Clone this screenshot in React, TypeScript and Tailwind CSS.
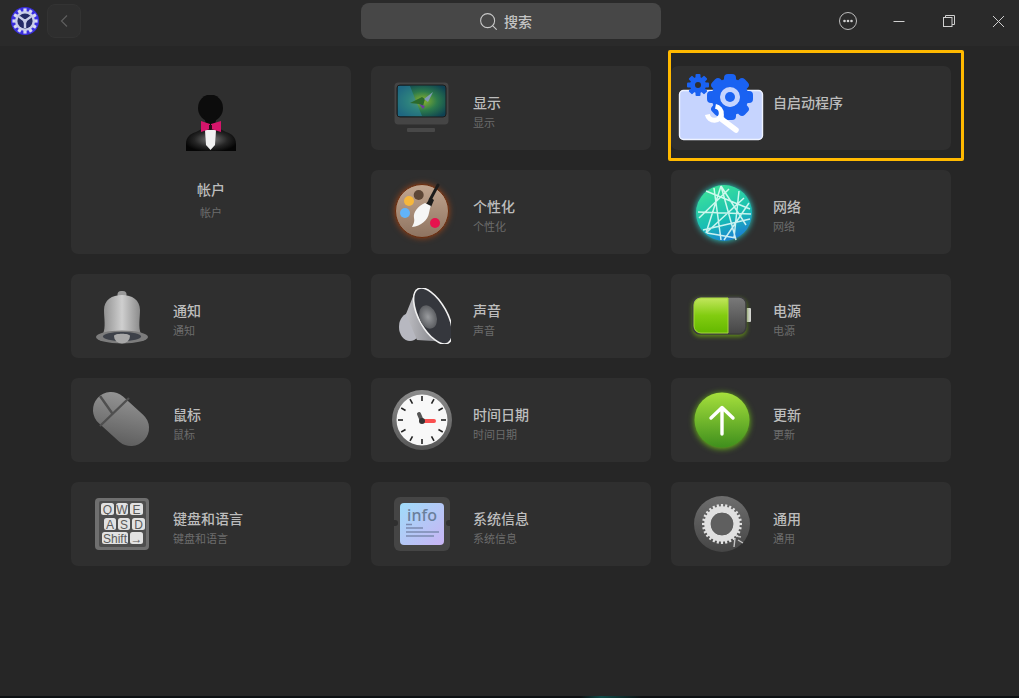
import type { ReactNode } from "react";
import { Search } from "lucide-react";

const font = "font-['Noto_Sans_CJK_SC','Noto_Sans',sans-serif]";

// App logo, a gear on a blue disc
function LogoIcon() {
  const teeth = Array.from({ length: 12 }, (_, i) => i * 30);
  return (
    <svg width="28" height="28" viewBox="0 0 28 28">
      <circle cx="14" cy="14" r="14" fill="#3a2fe0" />
      {teeth.map((a) => (
        <rect key={a} x="12.4" y="1.4" width="3.2" height="4" fill="#d5d8f2" transform={`rotate(${a} 14 14)`} />
      ))}
      <circle cx="14" cy="14" r="10" fill="#c9cde9" />
      <circle cx="14" cy="14" r="7.6" fill="#242a66" />
      <path d="M14 14V21M14 14L8 9.6M14 14L20 9.6" stroke="#c9cde9" strokeWidth="2.4" />
      <circle cx="14" cy="14" r="2" fill="#c9cde9" />
    </svg>
  );
}

function AccountIcon() {
  return (
    <svg width="52" height="58" viewBox="0 0 52 58">
      <defs>
        <radialGradient id="suit" cx="50%" cy="50%" r="55%">
          <stop offset="0" stopColor="#777777" />
          <stop offset="0.6" stopColor="#252525" />
          <stop offset="1" stopColor="#050505" />
        </radialGradient>
      </defs>
      <path d="M1 56V49C1 42 5 39 11 37L19 33H33L41 37C47 39 51 42 51 49V56Z" fill="url(#suit)" />
      <ellipse cx="25.5" cy="13" rx="12.5" ry="13.5" fill="#0c0c0c" />
      <path d="M19 20H32L30 30H21Z" fill="#0c0c0c" />
      <path d="M20 35H31L30 50L25.5 55L21 50Z" fill="#f1f1f1" />
      <path d="M16 26L25 29V34L16 37ZM36 26L26 29V34L36 37Z" fill="#d6156b" />
      <rect x="24" y="30" width="3" height="4" fill="#2a0a18" />
    </svg>
  );
}

function DisplayIcon() {
  return (
    <svg width="56" height="52" viewBox="0 0 56 52">
      <defs>
        <radialGradient id="screen" cx="52%" cy="50%" r="60%">
          <stop offset="0" stopColor="#8fb62c" />
          <stop offset="0.5" stopColor="#2c7a4c" />
          <stop offset="1" stopColor="#0e4152" />
        </radialGradient>
      </defs>
      <rect x="0.5" y="0.5" width="54" height="42" rx="4" fill="#454545" />
      <rect x="3" y="3" width="49" height="32" rx="3" fill="url(#screen)" stroke="#1c1c1c" />
      <path d="M4 4H16L28 34H4Z" fill="#2e86a8" fillOpacity="0.55" />
      <path d="M16 21L28 15L31 17L29 24L25 22Z" fill="#2b6a2b" />
      <path d="M25 22L31 24L29 27Z" fill="#6a3f9e" />
      <path d="M30 17L39 10L34 20Z" fill="#7f9bb5" />
      <rect x="13" y="46" width="28" height="4" rx="1" fill="#484848" />
    </svg>
  );
}

function PaletteIcon() {
  return (
    <svg width="58" height="60" viewBox="0 0 58 60" className="overflow-visible">
      <defs>
        <linearGradient id="wood" x1="0" y1="0" x2="0" y2="1">
          <stop offset="0" stopColor="#c2a690" />
          <stop offset="1" stopColor="#8e7360" />
        </linearGradient>
      </defs>
      <circle cx="29" cy="29" r="26.5" fill="url(#wood)" stroke="#6b2d0e" strokeWidth="1" className="drop-shadow-[0_0_3px_#9a4418]" />
      <circle cx="25.7" cy="13" r="5" fill="#5d4636" />
      <circle cx="16" cy="19" r="5" fill="#f6b73c" />
      <circle cx="12" cy="31" r="5" fill="#62b4fa" />
      <circle cx="42" cy="41" r="5" fill="#e5134e" />
      <path d="M37 18L45 3" stroke="#1c1c1c" strokeWidth="3" strokeLinecap="round" />
      <path d="M33 22L37.5 15.5L41 18L38 25Z" fill="#1c1c1c" />
      <path d="M32 21C25 24 20 30 21 36C22 40 20 43 19 45C28 44 35 38 36 31C37 27 37 25 38 24Z" fill="#f6f6f6" />
    </svg>
  );
}

function NetworkIcon() {
  return (
    <svg width="60" height="60" viewBox="0 0 60 60" className="overflow-visible">
      <defs>
        <linearGradient id="globe" x1="0.3" y1="0" x2="0.7" y2="1">
          <stop offset="0" stopColor="#3de39a" />
          <stop offset="0.6" stopColor="#18bdb4" />
          <stop offset="1" stopColor="#1b79d6" />
        </linearGradient>
      </defs>
      <g transform="translate(2 1)">
        <circle cx="30" cy="30" r="28" fill="url(#globe)" className="drop-shadow-[0_0_3px_#29d6d0]" />
        <path
          d="M27 3L42 57M27 3L12 50M27 3L52 42M12 8L56 26M4 29L57 31M12 50L50 15M9 47L56 36M27 57L20 5M40 55L45 8M13 50L42 55M5 35L35 6M30 57L55 20"
          stroke="#eafff9"
          strokeOpacity="0.85"
          strokeWidth="1.5"
          fill="none"
        />
      </g>
    </svg>
  );
}

function BellIcon() {
  return (
    <svg width="54" height="56" viewBox="0 0 54 56">
      <defs>
        <linearGradient id="bell" x1="0" y1="0" x2="1" y2="0">
          <stop offset="0" stopColor="#8f8f8f" />
          <stop offset="0.5" stopColor="#cfcfcf" />
          <stop offset="1" stopColor="#888888" />
        </linearGradient>
      </defs>
      <rect x="22.5" y="3" width="9" height="7" rx="3.5" fill="#9a9a9a" />
      <path d="M8 46C11 39 9 30 9 22C9 12 17 7 27 7C37 7 45 12 45 22C45 30 43 39 46 46Z" fill="url(#bell)" />
      <ellipse cx="27" cy="49" rx="26" ry="6.5" fill="#7c7c7c" />
      <ellipse cx="27" cy="48.5" rx="19" ry="4.5" fill="#3d4149" />
      <path d="M19 48A8 7.5 0 0 0 35 48C35 45 19 45 19 48Z" fill="#a8a8a8" />
    </svg>
  );
}

function SpeakerIcon() {
  return (
    <svg width="58" height="56" viewBox="0 0 58 56">
      <defs>
        <linearGradient id="horn" x1="0" y1="0" x2="1" y2="0">
          <stop offset="0" stopColor="#bdbdc2" />
          <stop offset="1" stopColor="#6e7075" />
        </linearGradient>
        <radialGradient id="hub">
          <stop offset="0" stopColor="#9a9c9f" />
          <stop offset="1" stopColor="#5c5e62" />
        </radialGradient>
      </defs>
      <ellipse cx="17" cy="39" rx="11" ry="14" fill="#b7b8c0" />
      <path d="M23 1L13 26L24 52L56 54Z" fill="url(#horn)" />
      <ellipse cx="40" cy="28" rx="14" ry="31" fill="#35373d" stroke="#f1f1f1" strokeWidth="1.6" transform="rotate(-29 40 28)" />
      <ellipse cx="35" cy="29" rx="8.5" ry="12" fill="url(#hub)" transform="rotate(-20 35 29)" />
    </svg>
  );
}

function BatteryIcon() {
  return (
    <svg width="60" height="40" viewBox="0 0 60 40" className="overflow-visible">
      <defs>
        <linearGradient id="charge" x1="0" y1="0" x2="0" y2="1">
          <stop offset="0" stopColor="#c2e65c" />
          <stop offset="0.5" stopColor="#82cc10" />
          <stop offset="1" stopColor="#64b800" />
        </linearGradient>
        <linearGradient id="empty" x1="0" y1="0" x2="0" y2="1">
          <stop offset="0" stopColor="#7a7a7a" />
          <stop offset="1" stopColor="#454545" />
        </linearGradient>
      </defs>
      <rect x="54" y="12" width="5" height="14" rx="1" fill="#d8d8d8" />
      <rect x="1" y="1" width="53" height="37" rx="7" fill="url(#empty)" stroke="#3d3d3d" strokeWidth="1.5" className="drop-shadow-[0_2px_2px_#5f8a18]" />
      <path d="M9 2H36V37H9A7 7 0 0 1 2 30V9A7 7 0 0 1 9 2Z" fill="url(#charge)" stroke="#a6d93a" strokeWidth="1" />
    </svg>
  );
}

function MouseIcon() {
  return (
    <svg width="56" height="56" viewBox="0 0 56 56" className="overflow-visible">
      <defs>
        <linearGradient id="mouse" x1="0" y1="0" x2="1" y2="1">
          <stop offset="0" stopColor="#9a9a9a" />
          <stop offset="1" stopColor="#585858" />
        </linearGradient>
      </defs>
      <rect x="-3.5" y="10" width="63" height="36" rx="18" fill="url(#mouse)" transform="translate(-1 -1) rotate(42 28 28)" />
      <path d="M6 4L18 21M35 6L6 34" stroke="#4f4f4f" strokeWidth="2.4" />
    </svg>
  );
}

function ClockIcon() {
  const ticks = Array.from({ length: 12 }, (_, i) => i * 30);
  return (
    <svg width="60" height="60" viewBox="0 0 60 60">
      <defs>
        <linearGradient id="rim" x1="0" y1="0" x2="0" y2="1">
          <stop offset="0" stopColor="#8c8c8c" />
          <stop offset="1" stopColor="#565656" />
        </linearGradient>
      </defs>
      <circle cx="30" cy="30" r="30" fill="url(#rim)" />
      <circle cx="30" cy="30" r="25.5" fill="#f8f8f8" />
      {ticks.map((a) => (
        <rect key={a} x="29.2" y="6" width="1.6" height="5" fill="#242424" transform={`rotate(${a} 30 30)`} />
      ))}
      <path d="M30 31H42" stroke="#fa5050" strokeWidth="4" strokeLinecap="round" />
      <path d="M30 31L27 24" stroke="#555" strokeWidth="4" strokeLinecap="round" />
      <circle cx="30" cy="31" r="3" fill="#333" />
    </svg>
  );
}

function UpdateIcon() {
  return (
    <svg width="56" height="56" viewBox="0 0 56 56" className="overflow-visible">
      <defs>
        <linearGradient id="update" x1="0" y1="0" x2="0" y2="1">
          <stop offset="0" stopColor="#a6e03c" />
          <stop offset="1" stopColor="#3f8f1d" />
        </linearGradient>
      </defs>
      <circle cx="28" cy="28" r="27.5" fill="url(#update)" className="drop-shadow-[0_1px_3px_#6fc218]" />
      <path d="M28 42V16M17 26L28 15.5L39 26" stroke="#fff" strokeWidth="3.4" strokeLinecap="round" strokeLinejoin="round" fill="none" />
    </svg>
  );
}

function KeyboardIcon() {
  const keys = [
    { t: "Q", x: 6, y: 5, w: 13 },
    { t: "W", x: 21, y: 5, w: 12 },
    { t: "E", x: 35, y: 5, w: 13 },
    { t: "A", x: 9, y: 20, w: 12 },
    { t: "S", x: 23, y: 20, w: 12 },
    { t: "D", x: 37, y: 20, w: 13 },
    { t: "Shift", x: 7, y: 34, w: 26 },
    { t: "→", x: 35, y: 34, w: 13 },
  ];
  return (
    <svg width="54" height="52" viewBox="0 0 54 52">
      <rect width="54" height="52" rx="4" fill="#6f6f6f" />
      <rect x="4" y="3" width="47" height="46" rx="2" fill="#4e4e4e" />
      {keys.map((k) => (
        <g key={k.t}>
          <rect x={k.x} y={k.y} width={k.w} height="12" rx="2.5" fill="#e2e2e2" />
          <text x={k.x + k.w / 2} y={k.y + 10.5} textAnchor="middle" fontSize="12" fontFamily="Liberation Sans, sans-serif" fill="#5a5a5a">
            {k.t}
          </text>
        </g>
      ))}
    </svg>
  );
}

function InfoIcon() {
  return (
    <svg width="56" height="54" viewBox="0 0 56 54">
      <defs>
        <linearGradient id="info" x1="0" y1="0" x2="1" y2="1">
          <stop offset="0" stopColor="#9fdcf9" />
          <stop offset="1" stopColor="#c9b4f4" />
        </linearGradient>
      </defs>
      <rect width="56" height="54" rx="6" fill="#454545" />
      <circle cx="1" cy="26" r="3" fill="#2f2f2f" />
      <circle cx="55" cy="26" r="3" fill="#2f2f2f" />
      <rect x="6" y="6" width="44" height="42" rx="4" fill="url(#info)" />
      <text x="28" y="24" textAnchor="middle" fontSize="16" fontWeight="500" fontFamily="Noto Sans, sans-serif" fill="#6a7f9b">
        info
      </text>
      <path d="M12 27.5H18M12 31H29M12 35H45M12 39H40" stroke="#7c8bb0" strokeWidth="1.5" />
    </svg>
  );
}

function GeneralIcon() {
  const teeth = Array.from({ length: 28 }, (_, i) => (i * 360) / 28);
  return (
    <svg width="56" height="56" viewBox="0 0 56 56">
      <defs>
        <linearGradient id="general" x1="0" y1="0" x2="0" y2="1">
          <stop offset="0" stopColor="#6e6e6e" />
          <stop offset="1" stopColor="#454545" />
        </linearGradient>
      </defs>
      <circle cx="28" cy="28" r="28" fill="url(#general)" />
      {teeth.map((a) => (
        <rect key={a} x="26.9" y="8" width="2.2" height="5" fill="#e2e2e2" transform={`rotate(${a} 28 28)`} />
      ))}
      <circle cx="28" cy="28" r="14.5" fill="none" stroke="#e0e0e0" strokeWidth="6.5" />
      <circle cx="28" cy="28" r="11.2" fill="#5f5f5f" />
      <path d="M42 40L47 41M41 42L40 51M44 44L49 47" stroke="#c4c4c4" strokeWidth="1.4" fill="none" />
    </svg>
  );
}

function AutostartIcon() {
  const small = [0, 45, 90, 135, 180, 225, 270, 315];
  return (
    <svg width="84" height="66" viewBox="0 0 84 66" className="overflow-visible">
      <rect x="0.5" y="16.5" width="83" height="49" rx="4" fill="#c6d4fe" stroke="#eef2ff" strokeWidth="1.4" />
      {small.map((a) => (
        <rect key={a} x="16.5" y="0" width="5" height="6" rx="1" fill="#1a62f2" transform={`rotate(${a} 19 11)`} />
      ))}
      <circle cx="19" cy="11" r="5.5" fill="none" stroke="#1a62f2" strokeWidth="5" />
      {small.map((a) => (
        <rect key={a} x="45" y="0" width="12" height="11" rx="4" fill="#1a62f2" transform={`rotate(${a} 51 23)`} />
      ))}
      <circle cx="51" cy="23" r="14" fill="none" stroke="#1a62f2" strokeWidth="9" />
      <circle cx="51" cy="23" r="10" fill="#c6d4fe" />
      <circle cx="51" cy="23" r="5" fill="#1a62f2" />
      <path d="M36.5 32.4A7 7 0 1 1 28.4 40.5" fill="none" stroke="#fff" strokeWidth="5" />
      <path d="M41 44L57 56" fill="none" stroke="#fff" strokeWidth="5.5" strokeLinecap="round" />
    </svg>
  );
}

function Card({ icon, title, sub }: { icon: ReactNode; title: string; sub?: string }) {
  return (
    <div className="flex h-[84px] items-center rounded-[7px] bg-[#2f2f2f]">
      <div className="flex w-[102px] shrink-0 justify-center">{icon}</div>
      <div className={sub ? "pt-[6px]" : "pb-[12px]"}>
        <div className="text-[14px] font-medium leading-[20px] text-[#bdbdbd]">{title}</div>
        {sub && <div className="mt-[2px] text-[11px] leading-[16px] text-[#6c6c6c]">{sub}</div>}
      </div>
    </div>
  );
}

export default function App() {
  return (
    <div className={`relative flex h-[698px] w-[1019px] flex-col overflow-hidden bg-[#262626] ${font}`}>
      {/* Title bar */}
      <header className="flex h-[46px] shrink-0 items-center bg-[#2a2a2a] pb-[4px]">
        <div className="ml-[11px]">
          <LogoIcon />
        </div>
        <button className="ml-[8px] flex h-[34px] w-[34px] items-center justify-center rounded-[8px] border border-[#333333] bg-[#2e2e2e]">
          <svg width="10" height="14" viewBox="0 0 10 14" fill="none" stroke="#5e5e5e" strokeWidth="1.2">
            <path d="M8 1.5L2.5 7L8 12.5" />
          </svg>
        </button>
        <div className="ml-[280px] flex h-[36px] w-[300px] items-center justify-center gap-[5px] rounded-[8px] bg-[#474747] pr-[12px]">
          <Search size={21} strokeWidth={1.2} color="#c9c9c9" />
          <span className="text-[14px] font-medium text-[#c4c4c4]">搜索</span>
        </div>
        <div className="ml-[177px] flex items-center">
          <svg width="20" height="20" viewBox="0 0 20 20" fill="none">
            <circle cx="10" cy="10" r="8.5" stroke="#bdbdbd" strokeWidth="1" />
            <circle cx="6.5" cy="10" r="1.3" fill="#d0d0d0" />
            <circle cx="10" cy="10" r="1.3" fill="#d0d0d0" />
            <circle cx="13.5" cy="10" r="1.3" fill="#d0d0d0" />
          </svg>
          <svg className="ml-[35px]" width="12" height="12" viewBox="0 0 12 12" stroke="#cfcfcf" strokeWidth="1">
            <path d="M0.5 6.5H11.5" />
          </svg>
          <svg className="ml-[38px]" width="12" height="12" viewBox="0 0 12 12" fill="none" stroke="#cfcfcf" strokeWidth="1">
            <rect x="0.5" y="2.5" width="8.5" height="9" />
            <path d="M2.5 2.5V0.5H11.5V9.5H9" />
          </svg>
          <svg className="ml-[37px]" width="13" height="13" viewBox="0 0 13 13" stroke="#cfcfcf" strokeWidth="1">
            <path d="M1 1L12 12M12 1L1 12" />
          </svg>
        </div>
      </header>

      {/* Settings grid */}
      <main className="grid grid-cols-[280px_280px_280px] auto-rows-[84px] gap-5 pl-[71px] pt-[20px]">
        <div className="row-span-2 flex flex-col items-center rounded-[7px] bg-[#2f2f2f] pt-[29px]">
          <AccountIcon />
          <div className="mt-[26px] text-[14px] font-medium leading-[20px] text-[#bdbdbd]">帐户</div>
          <div className="mt-[5px] text-[11px] leading-[16px] text-[#6c6c6c]">帐户</div>
        </div>
        <Card icon={<DisplayIcon />} title="显示" sub="显示" />
        <Card icon={<div className="mt-[-10px] mb-[-8px] ml-[-2px]"><AutostartIcon /></div>} title="自启动程序" />
        <Card icon={<PaletteIcon />} title="个性化" sub="个性化" />
        <Card icon={<NetworkIcon />} title="网络" sub="网络" />
        <Card icon={<BellIcon />} title="通知" sub="通知" />
        <Card icon={<SpeakerIcon />} title="声音" sub="声音" />
        <Card icon={<BatteryIcon />} title="电源" sub="电源" />
        <Card icon={<MouseIcon />} title="鼠标" sub="鼠标" />
        <Card icon={<ClockIcon />} title="时间日期" sub="时间日期" />
        <Card icon={<UpdateIcon />} title="更新" sub="更新" />
        <Card icon={<KeyboardIcon />} title="键盘和语言" sub="键盘和语言" />
        <Card icon={<InfoIcon />} title="系统信息" sub="系统信息" />
        <Card icon={<GeneralIcon />} title="通用" sub="通用" />
      </main>

      {/* Highlight marker over the autostart card */}
      <div className="absolute left-[668px] top-[50px] h-[111px] w-[296px] rounded-[2px] border-[3px] border-[#ffb900]" />

      {/* Dark strip left by the desktop below the window */}
      <div className="absolute bottom-0 left-0 h-[2px] w-full bg-[linear-gradient(90deg,#0c1012_57%,#0e4a48_59%,#0c1012_63%)]" />
    </div>
  );
}
